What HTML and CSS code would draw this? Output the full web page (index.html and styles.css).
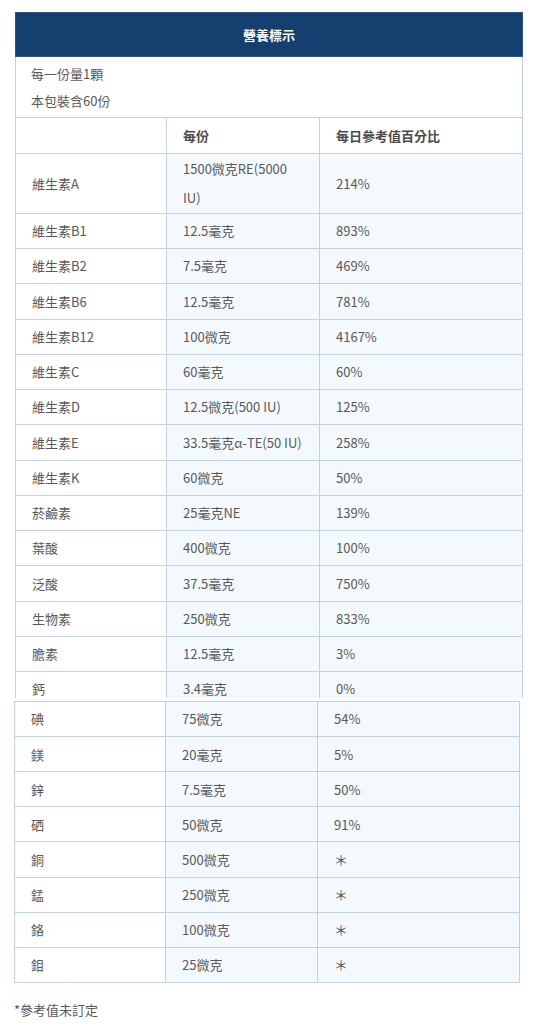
FILE: index.html
```html
<!DOCTYPE html>
<html lang="zh-Hant">
<head>
<meta charset="utf-8">
<title>營養標示</title>
<link rel="stylesheet" href="styles.css">
</head>
<body>
<div class="page">
  <table class="nutri nutri-top">
    <colgroup><col class="c1"><col class="c2"><col class="c3"></colgroup>
    <thead>
      <tr class="title-row"><th colspan="3">營養標示</th></tr>
    </thead>
    <tbody>
      <tr class="info-row"><td colspan="3"><div>每一份量1顆</div><div>本包裝含60份</div></td></tr>
      <tr class="head-row"><th></th><th>每份</th><th>每日參考值百分比</th></tr>
      <tr><td>維生素A</td><td>1500微克RE(5000 IU)</td><td>214%</td></tr>
      <tr><td>維生素B1</td><td>12.5毫克</td><td>893%</td></tr>
      <tr><td>維生素B2</td><td>7.5毫克</td><td>469%</td></tr>
      <tr><td>維生素B6</td><td>12.5毫克</td><td>781%</td></tr>
      <tr><td>維生素B12</td><td>100微克</td><td>4167%</td></tr>
      <tr><td>維生素C</td><td>60毫克</td><td>60%</td></tr>
      <tr><td>維生素D</td><td>12.5微克(500 IU)</td><td>125%</td></tr>
      <tr><td>維生素E</td><td>33.5毫克α-TE(50 IU)</td><td>258%</td></tr>
      <tr><td>維生素K</td><td>60微克</td><td>50%</td></tr>
      <tr><td>菸鹼素</td><td>25毫克NE</td><td>139%</td></tr>
      <tr><td>葉酸</td><td>400微克</td><td>100%</td></tr>
      <tr><td>泛酸</td><td>37.5毫克</td><td>750%</td></tr>
      <tr><td>生物素</td><td>250微克</td><td>833%</td></tr>
      <tr><td>膽素</td><td>12.5毫克</td><td>3%</td></tr>
      <tr class="cut-row"><td>鈣</td><td>3.4毫克</td><td>0%</td></tr>
    </tbody>
  </table>
  <table class="nutri nutri-bottom">
    <colgroup><col class="c1"><col class="c2"><col class="c3"></colgroup>
    <tbody>
      <tr><td>碘</td><td>75微克</td><td>54%</td></tr>
      <tr><td>鎂</td><td>20毫克</td><td>5%</td></tr>
      <tr><td>鋅</td><td>7.5毫克</td><td>50%</td></tr>
      <tr><td>硒</td><td>50微克</td><td>91%</td></tr>
      <tr><td>銅</td><td>500微克</td><td class="star">＊</td></tr>
      <tr><td>錳</td><td>250微克</td><td class="star">＊</td></tr>
      <tr><td>鉻</td><td>100微克</td><td class="star">＊</td></tr>
      <tr><td>鉬</td><td>25微克</td><td class="star">＊</td></tr>
    </tbody>
  </table>
  <p class="note">*參考值未訂定</p>
</div>
</body>
</html>
```
FILE: styles.css
```css
html, body {
  margin: 0;
  padding: 0;
  background: #ffffff;
}
body {
  font-family: "Noto Sans CJK TC", "Noto Sans", sans-serif;
  font-size: 13px;
  color: #585858;
}
.page {
  padding: 12px 16px 0 15px;
}
.nutri {
  border-collapse: collapse;
  table-layout: fixed;
  width: 507px;
}
.nutri .c1 { width: 151px; }
.nutri .c2 { width: 153px; }
.nutri .c3 { width: 203px; }
.nutri td,
.nutri th {
  border: 1px solid #c0d2e6;
  padding: 0 16px;
  line-height: 29.4px;
  height: 34.25px;
  text-align: left;
  vertical-align: middle;
  font-weight: normal;
}
.nutri td + td {
  background: #f4f9fe;
}
.title-row th {
  background: #143f6e;
  border-color: #2e5582;
  color: #ffffff;
  font-weight: bold;
  text-align: center;
  height: 43px;
  line-height: 20px;
  padding: 0;
}
.info-row td {
  padding: 3px 16px 3px 15px;
  line-height: 27px;
  height: auto;
  background: #ffffff;
}
.nutri .head-row th {
  font-weight: bold;
  color: #4a4a4a;
  background: #ffffff;
  height: 35px;
}
.cut-row td {
  height: 0;
  line-height: 19px;
  padding-top: 7px;
  padding-bottom: 0;
  vertical-align: top;
  border-bottom: 0;
}
.nutri-bottom {
  width: 505px;
  margin: 3px 0 0 -1px;
}
.nutri-bottom .c1 { width: 151px; }
.nutri-bottom .c2 { width: 152px; }
.nutri-bottom .c3 { width: 202px; }
.nutri-bottom td {
  height: 34.1px;
}
.star {
  font-size: 14px;
}
.note {
  margin: 17px 0 0 -1px;
  line-height: 20px;
}
```
